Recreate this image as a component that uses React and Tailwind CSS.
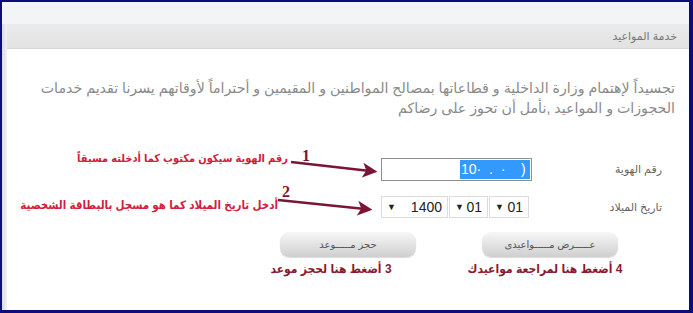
import React from "react";

const F = { fontFamily: '"Liberation Sans","DejaVu Sans",sans-serif' };
const C = { fontFamily: '"Liberation Sans","DejaVu Sans Condensed","DejaVu Sans",sans-serif' };

function Select({ value, w }) {
  return (
    <div className={`flex items-center h-[22px] border border-[#dcdcdc] bg-white ${w}`} dir="ltr">
      <span className="pl-[5px] text-[9px] text-[#222] leading-none">▼</span>
      <span className="flex-1 text-right pr-[5px] text-[14px] text-[#222]">{value}</span>
    </div>
  );
}

function Btn({ children }) {
  return (
    <div className="w-[136px] h-[25px] rounded-[9px] bg-gradient-to-b from-[#f7f7f7] to-[#cfcfcf] flex items-center justify-center text-[10px] text-[#555] shadow-[0_1px_1px_rgba(0,0,0,0.15)]">
      {children}
    </div>
  );
}

export default function App() {
  return (
    <div className="w-[693px] h-[313px] bg-[#0c0c7c] overflow-hidden" style={F}>
      <div className="relative ml-[2px] mt-[2px] w-[687px] h-[308px] bg-white flex flex-col">
        <div className="h-[22px] bg-[#f3f4f5]" />
        <div className="flex flex-1">
          <div className="w-[5px] bg-gradient-to-r from-[#d9dbe4] to-[#f2f2f2]" />
          <div className="flex-1 flex flex-col">
            <div className="h-[25px] bg-gradient-to-b from-[#ebebeb] to-[#e2e2e2] border-b border-[#d8d8d8] flex items-center justify-end pr-[12px]">
              <span dir="rtl" className="text-[11px] text-[#777]">خدمة المواعيد</span>
            </div>
            <div dir="rtl" className="pr-[14px] pl-[20px] pt-[29px] text-[14.2px] leading-[20px] text-[#8a8a8a] whitespace-nowrap">
              تجسيداً لإهتمام وزارة الداخلية و قطاعاتها بمصالح المواطنين و المقيمين و أحتراماً لأوقاتهم يسرنا تقديم خدمات
              <br />
              الحجوزات و المواعيد ,نأمل أن تحوز على رضاكم
            </div>
            <div className="flex flex-col mt-[40px]">
              <div className="flex items-center h-[23px]">
                <div className="w-[374px]" />
                <div className="w-[151px] h-[23px] border border-[#8f8f8f] flex items-center justify-end pr-[1px]" dir="ltr">
                  <span className="bg-[#3399ff] text-white text-[14px] leading-[19px] w-[70px] pl-[1px] whitespace-pre">10·  .  ·    )</span>
                </div>
                <div className="flex-1 text-right pr-[27px] text-[11px] text-[#666]" dir="rtl">رقم الهوية</div>
              </div>
              <div className="flex items-center h-[22px] mt-[15px]">
                <div className="w-[374px]" />
                <div className="flex gap-[1px] w-[151px]">
                  <Select value="1400" w="w-[67px]" />
                  <Select value="01" w="w-[39px]" />
                  <Select value="01" w="w-[40px]" />
                </div>
                <div className="flex-1 text-right pr-[27px] text-[11px] text-[#666]" dir="rtl">تاريخ الميلاد</div>
              </div>
              <div className="flex mt-[14px] pl-[273px] gap-[66px]" dir="ltr">
                <div className="w-[136px] flex flex-col items-center">
                  <Btn><span dir="rtl">حجز مـــــوعد</span></Btn>
                  <div dir="rtl" className="mt-[3px] mr-[34px] text-[12px] font-bold text-[#8b1a2e] whitespace-nowrap" style={C}>3 أضغط هنا لحجز موعد</div>
                </div>
                <div className="w-[136px] flex flex-col items-center">
                  <Btn><span dir="rtl">عـــــرض مـــــواعيدى</span></Btn>
                  <div dir="rtl" className="mt-[3px] mr-[10px] text-[12px] font-bold text-[#8b1a2e] whitespace-nowrap" style={C}>4 أضغط هنا لمراجعة مواعيدك</div>
                </div>
              </div>
            </div>
          </div>
        </div>

        {/* annotations */}
        <div dir="rtl" className="absolute left-[60px] top-[148px] w-[226px] text-right text-[11px] font-bold text-[#d0203c] whitespace-nowrap" style={C}>
          رقم الهوية سيكون مكتوب كما أدخلته مسبقاً
        </div>
        <div dir="rtl" className="absolute left-[4px] top-[195px] w-[272px] text-right text-[11.5px] font-bold text-[#d0203c] whitespace-nowrap" style={C}>
          أدخل تاريخ الميلاد كما هو مسجل بالبطاقة الشخصية
        </div>
        <div className="absolute left-[300px] top-[142px] text-[16px] font-bold text-[#7a1634]" style={{ fontFamily: '"Liberation Serif",serif' }}>1</div>
        <div className="absolute left-[280px] top-[178px] text-[16px] font-bold text-[#7a1634]" style={{ fontFamily: '"Liberation Serif",serif' }}>2</div>
        <svg className="absolute left-0 top-0" width="687" height="308">
          <defs>
            <marker id="ah" markerWidth="6" markerHeight="6" refX="3" refY="3" orient="auto" markerUnits="strokeWidth">
              <path d="M0,0 L6,3 L0,6 L1.5,3 z" fill="#7a1634" />
            </marker>
          </defs>
          <line x1="289" y1="160" x2="368" y2="169" stroke="#7a1634" strokeWidth="2.5" markerEnd="url(#ah)" />
          <line x1="276" y1="198" x2="363" y2="207" stroke="#7a1634" strokeWidth="2.5" markerEnd="url(#ah)" />
        </svg>
      </div>
    </div>
  );
}
